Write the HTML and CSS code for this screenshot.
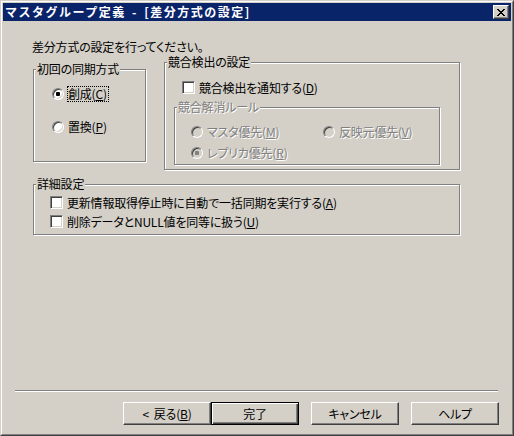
FILE: index.html
```html
<!DOCTYPE html>
<html>
<head lang="ja">
    <meta charset="UTF-8">
    <title>マスタグループ定義</title>
    <link rel="stylesheet" href="styles.css">
</head>
<body>
<div class="window">
    <div class="frame">
        <div class="titlebar">
            <span class="caption">マスタグループ定義 - [差分方式の設定]</span>
            <span class="close">
                <svg width="8" height="7" viewBox="0 0 8 7" shape-rendering="crispEdges"><path d="M0 0h2v1H0zM6 0h2v1H6zM1 1h2v1H1zM5 1h2v1H5zM2 2h4v1H2zM3 3h2v1H3zM2 4h4v1H2zM1 5h2v1H1zM5 5h2v1H5zM0 6h2v1H0zM6 6h2v1H6z" fill="#000"/></svg>
            </span>
        </div>
        <div class="main">
            <div class="content">
                <p class="intro">差分方式の設定を行ってください。</p>
                <div class="row">
                    <div class="group g-first">
                        <span class="legend">初回の同期方式</span>
                        <div class="opt"><span class="radio on"></span><span class="lbl focus">創成(<u>C</u>)</span></div>
                        <div class="opt"><span class="radio"></span><span class="lbl">置換(<u>P</u>)</span></div>
                    </div>
                    <div class="group g-detect">
                        <span class="legend">競合検出の設定</span>
                        <div class="opt chk"><span class="check"></span><span class="lbl">競合検出を通知する(<u>D</u>)</span></div>
                        <div class="group g-rule">
                            <span class="legend off">競合解消ルール</span>
                            <div class="rule-grid">
                                <div class="opt"><span class="radio dis"></span><span class="lbl off">マスタ優先(<u>M</u>)</span></div>
                                <div class="opt"><span class="radio dis"></span><span class="lbl off">反映元優先(<u>V</u>)</span></div>
                                <div class="opt"><span class="radio dis on"></span><span class="lbl off">レプリカ優先(<u>R</u>)</span></div>
                            </div>
                        </div>
                    </div>
                </div>
                <div class="group g-detail">
                    <span class="legend">詳細設定</span>
                    <div class="opt chk"><span class="check"></span><span class="lbl">更新情報取得停止時に自動で一括同期を実行する(<u>A</u>)</span></div>
                    <div class="opt chk"><span class="check"></span><span class="lbl">削除データとNULL値を同等に扱う(<u>U</u>)</span></div>
                </div>
            </div>
            <div class="footer">
                <div class="sep"></div>
                <div class="buttons">
                    <span class="btn"><span class="lt">&lt;</span>戻る(<u>B</u>)</span>
                    <span class="btn default">完了</span>
                    <span class="btn spaced">キャンセル</span>
                    <span class="btn spaced">ヘルプ</span>
                </div>
            </div>
        </div>
    </div>
</div>
</body>
</html>
```

FILE: styles.css
```css
* {
    padding: 0;
    margin: 0;
    box-sizing: border-box;
}

html, body {
    background: #d4d0c8;
}

body {
    font: 12px/14px "Noto Sans CJK JP", "Noto Sans", sans-serif;
    font-feature-settings: "palt";
    letter-spacing: -0.2px;
    color: #000;
}

.window {
    width: 514px;
    height: 436px;
    border: 1px solid;
    border-color: #d4d0c8 #404040 #404040 #d4d0c8;
}

.frame {
    height: 100%;
    border: 1px solid;
    border-color: #fff #808080 #808080 #fff;
    padding: 1px;
    display: flex;
    flex-direction: column;
}

.titlebar {
    height: 18px;
    background: #0a246a;
    display: flex;
    align-items: center;
    justify-content: space-between;
    padding: 0 2px;
}

.caption {
    color: #fff;
    font-weight: bold;
    font-feature-settings: normal;
    letter-spacing: 1.5px;
    word-spacing: 2px;
}

.close {
    width: 16px;
    height: 14px;
    background: #d4d0c8;
    border: 1px solid;
    border-color: #fff #404040 #404040 #fff;
    box-shadow: inset -1px -1px 0 #808080;
    display: flex;
    align-items: center;
    justify-content: center;
}

.main {
    flex: 1;
    display: flex;
    flex-direction: column;
}

.content {
    padding: 19px 0 0 30px;
}

.intro {
    margin-left: -1px;
}

.row {
    display: flex;
    align-items: flex-start;
    margin-top: 8px;
}

/* etched group box */
.group {
    position: relative;
    border: 1px solid #808080;
    box-shadow: inset 1px 1px 0 #fff, 1px 1px 0 #fff;
}

.legend {
    position: absolute;
    top: -8px;
    left: 2px;
    padding: 0 1px;
    background: #d4d0c8;
    white-space: nowrap;
}

.off {
    color: #808080;
    text-shadow: 1px 1px 0 #fff;
}

.g-first {
    width: 113px;
    height: 93px;
    margin-top: 7px;
    padding: 18px 0 0 18px;
    display: flex;
    flex-direction: column;
    gap: 21px;
}

.g-detect {
    width: 296px;
    height: 108px;
    margin-left: 18px;
    padding-top: 18px;
}

.g-detect > .chk {
    margin-left: 17px;
}

.g-rule {
    width: 266px;
    height: 58px;
    margin: 13px 0 0 9px;
    padding: 18px 0 0 16px;
}

.rule-grid {
    display: grid;
    grid-template-columns: 132px auto;
    row-gap: 9px;
}

.g-detail {
    width: 427px;
    height: 51px;
    margin-top: 14px;
    padding: 11px 0 0 16px;
    display: flex;
    flex-direction: column;
    gap: 6px;
}

.opt {
    display: flex;
    align-items: center;
    height: 12px;
    gap: 3px;
    white-space: nowrap;
}

.opt.chk {
    height: 13px;
}

.radio {
    width: 12px;
    height: 12px;
    flex: none;
    border-radius: 50%;
    border: 1px solid;
    border-color: #808080 #fff #fff #808080;
    box-shadow: inset 1px 1px 0 #404040, inset -1px -1px 0 #d4d0c8;
    background: #fff;
    display: flex;
    align-items: center;
    justify-content: center;
}

.radio.on::after {
    content: "";
    width: 4px;
    height: 4px;
    border-radius: 1px;
    background: #000;
}

.radio.dis {
    background: #d4d0c8;
}

.radio.dis.on::after {
    background: #808080;
}

.check {
    width: 13px;
    height: 13px;
    flex: none;
    border: 1px solid;
    border-color: #808080 #fff #fff #808080;
    box-shadow: inset 1px 1px 0 #404040, inset -1px -1px 0 #d4d0c8;
    background: #fff;
}

.lbl {
    border: 1px solid transparent;
    padding-right: 1px;
    line-height: 14px;
}

.lbl.focus {
    border: 1px dotted #000;
}

u {
    text-decoration: underline;
    text-underline-offset: 1px;
}

.footer {
    margin-top: auto;
}

.sep {
    margin: 0 13px 0 12px;
    border-top: 1px solid #808080;
    border-bottom: 1px solid #fff;
}

.buttons {
    display: flex;
    justify-content: flex-end;
    padding: 10px 12px 8px 0;
}

.btn {
    width: 88px;
    height: 23px;
    border: 1px solid;
    border-color: #fff #404040 #404040 #fff;
    box-shadow: inset -1px -1px 0 #808080, inset 1px 1px 0 #d4d0c8;
    display: flex;
    align-items: center;
    justify-content: center;
}

.btn .lt {
    margin-right: 5px;
}

.btn.default {
    border: 1px solid #000;
    box-shadow: inset 1px 1px 0 #fff, inset -1px -1px 0 #404040, inset -2px -2px 0 #808080;
}

.btn.spaced {
    margin-left: 12px;
}
```
